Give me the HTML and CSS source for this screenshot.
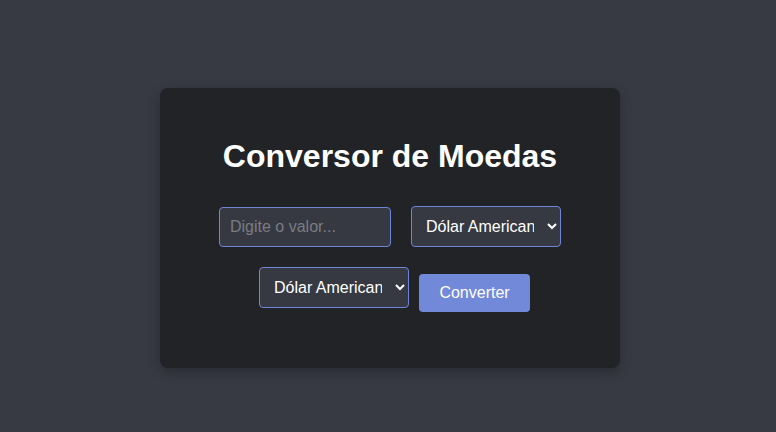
FILE: index.html
```html
<!DOCTYPE html>
<html lang="pt-BR">
<head>
<meta charset="utf-8">
<title>Conversor de Moedas</title>
<link rel="stylesheet" href="styles.css">
</head>
<body>
  <main class="card">
    <h1 class="title">Conversor de Moedas</h1>
    <div class="row row-top">
      <input class="field amount" type="text" placeholder="Digite o valor...">
      <select class="field currency">
        <option>Dólar Americano</option>
        <option>Real Brasileiro</option>
        <option>Euro</option>
      </select>
    </div>
    <div class="row row-bottom">
      <select class="field currency">
        <option>Dólar Americano</option>
        <option>Real Brasileiro</option>
        <option>Euro</option>
      </select>
      <button class="convert" type="button">Converter</button>
    </div>
  </main>
</body>
</html>
```
FILE: styles.css
```css
html, body {
  margin: 0;
  padding: 0;
}
body {
  background: #373a43;
  font-family: "Liberation Sans", Arial, sans-serif;
  color: #ffffff;
  height: 432px;
  display: flex;
  justify-content: center;
  align-items: flex-start;
  padding-top: 88px;
  padding-left: 4px;
  box-sizing: border-box;
}
.card {
  width: 460px;
  box-sizing: border-box;
  background: #222327;
  border-radius: 8px;
  box-shadow: 0 4px 12px rgba(0, 0, 0, 0.25);
  padding: 50px 0 56px;
  display: flex;
  flex-direction: column;
  align-items: center;
}
.title {
  margin: 0 0 31px;
  font-size: 32px;
  line-height: 37px;
  font-weight: bold;
  color: #ffffff;
}
.row {
  display: flex;
  justify-content: center;
}
.row-top {
  gap: 20px;
  align-items: center;
  margin-bottom: 20px;
}
.row-bottom {
  gap: 10px;
  align-items: flex-start;
  padding-left: 9px;
}
.field {
  box-sizing: border-box;
  border: 1px solid #6f85d6;
  border-radius: 4px;
  background: #363942;
  color: #ffffff;
  font-family: "Liberation Sans", Arial, sans-serif;
  font-size: 16px;
  padding: 0 10px;
  margin: 0;
  outline: none;
}
.amount {
  width: 172px;
  height: 40px;
}
.amount::placeholder {
  color: #7a7c82;
}
.currency {
  width: 150px;
  height: 41px;
}
.convert {
  margin: 7px 0 0;
  width: 111px;
  height: 38px;
  border: none;
  border-radius: 4px;
  background: #7289da;
  color: #ffffff;
  font-family: "Liberation Sans", Arial, sans-serif;
  font-size: 16px;
  padding: 0;
  cursor: pointer;
}
```
